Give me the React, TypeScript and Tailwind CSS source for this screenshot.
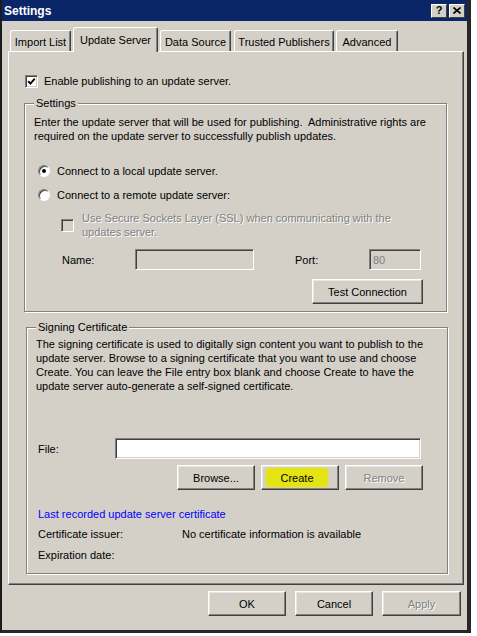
import React from 'react';

const raised =
  'flex items-center justify-center h-[25px] bg-[#d4d0c8] border border-t-white border-l-white border-r-[#404040] border-b-[#404040] shadow-[inset_-1px_-1px_0_#808080,inset_1px_1px_0_#e8e6e1]';
const sunken =
  'border border-t-[#808080] border-l-[#808080] border-r-white border-b-white shadow-[inset_1px_1px_0_#404040,inset_-1px_-1px_0_#d4d0c8]';
const etched =
  'border border-[#808080] shadow-[inset_1px_1px_0_#ffffff,1px_1px_0_#ffffff]';
const disabledText = 'text-[#808080] [text-shadow:1px_1px_0_#ffffff]';

const Check: React.FC<{ checked?: boolean; disabled?: boolean }> = ({ checked, disabled }) => (
  <span
    className={`w-[13px] h-[13px] shrink-0 flex items-center justify-center ${sunken} ${
      disabled ? 'bg-[#d4d0c8]' : 'bg-white'
    }`}
  >
    {checked && (
      <svg width="9" height="9" viewBox="0 0 9 9">
        <path d="M1.2 4.2 L3.4 6.6 L7.8 1.6" fill="none" stroke="#000" strokeWidth="1.9" />
      </svg>
    )}
  </span>
);

const Radio: React.FC<{ checked?: boolean }> = ({ checked }) => (
  <span className="w-[12px] h-[12px] shrink-0 rounded-full bg-white border border-t-[#808080] border-l-[#808080] border-r-white border-b-white shadow-[inset_1px_1px_0_#404040] flex items-center justify-center">
    {checked && <span className="w-[4px] h-[4px] rounded-full bg-black" />}
  </span>
);

const Tab: React.FC<{ label: string; width: string; active?: boolean; ml: string }> = ({
  label,
  width,
  active,
  ml,
}) => (
  <div
    className={`${width} ${ml} flex items-center justify-center border-t border-l border-t-white border-l-white border-r border-r-[#404040] shadow-[inset_-1px_0_0_#808080] rounded-tl-[3px] rounded-tr-[2px] bg-[#d4d0c8] ${
      active ? 'h-[25px] -mb-px relative z-10' : 'h-[21px] pt-[2px]'
    }`}
  >
    {label}
  </div>
);

export default function App() {
  return (
    <div className="w-[477px] h-[636px] bg-white font-['Liberation_Sans',Arial,sans-serif] text-[11px] leading-[14px] text-black">
      <div className="w-[471px] h-[633px] bg-[#d4d0c8] border-l-2 border-l-[#1c1c1c] border-r-4 border-r-[#262626] border-b-[3px] border-b-[#262626] flex flex-col">
        {/* Title bar */}
        <div className="h-[21px] shrink-0 bg-[#0b2569] flex items-center pl-[2px] pr-[2px]">
          <span className="text-white font-bold text-[12px] leading-[14px]">Settings</span>
          <div className="ml-auto flex gap-[2px]">
            <div className="w-[16px] h-[14px] bg-[#d4d0c8] border border-t-white border-l-white border-r-[#404040] border-b-[#404040] flex items-center justify-center font-bold text-[11px] leading-[11px]">
              ?
            </div>
            <div className="w-[16px] h-[14px] bg-[#d4d0c8] border border-t-white border-l-white border-r-[#404040] border-b-[#404040] flex items-center justify-center">
              <svg width="8" height="7" viewBox="0 0 8 7">
                <path d="M0.5 0.5 L7.5 6.5 M7.5 0.5 L0.5 6.5" stroke="#000" strokeWidth="1.6" />
              </svg>
            </div>
          </div>
        </div>

        {/* Tabs */}
        <div className="h-[30px] shrink-0 flex items-end pl-[8px]">
          <Tab label="Import List" width="w-[61px]" ml="ml-0" />
          <Tab label="Update Server" width="w-[85px]" ml="ml-[2px]" active />
          <Tab label="Data Source" width="w-[71px]" ml="ml-[2px]" />
          <Tab label="Trusted Publishers" width="w-[100px]" ml="ml-[3px]" />
          <Tab label="Advanced" width="w-[62px]" ml="ml-[2px]" />
        </div>

        {/* Panel */}
        <div className="ml-[6px] w-[456px] h-[534px] shrink-0 flex flex-col border border-t-white border-l-white border-r-[#404040] border-b-[#404040] shadow-[inset_-1px_-1px_0_#808080]">
          <label className="mt-[22px] ml-[16px] flex items-center gap-[6px]">
            <Check checked />
            <span>Enable publishing to an update server.</span>
          </label>

          {/* Settings group */}
          <fieldset className={`mt-[9px] ml-[15px] w-[423px] h-[215px] pl-[9px] ${etched}`}>
            <legend className="px-[2px] leading-[13px] bg-[#d4d0c8]">Settings</legend>
            <p className="mt-[5px]">
              Enter the update server that will be used for publishing.&nbsp; Administrative rights are
              <br />
              required on the update server to successfully publish updates.
            </p>
            <div className="mt-[21px] ml-[4px] flex items-center gap-[7px]">
              <Radio checked />
              <span>Connect to a local update server.</span>
            </div>
            <div className="mt-[10px] ml-[4px] flex items-center gap-[7px]">
              <Radio />
              <span>Connect to a remote update server:</span>
            </div>
            <div className="mt-[9px] ml-[27px] flex items-center gap-[8px]">
              <Check disabled />
              <span className={disabledText}>
                Use Secure Sockets Layer (SSL) when communicating with the
                <br />
                updates server.
              </span>
            </div>
            <div className="mt-[10px] ml-[28px] flex items-center">
              <span className="w-[73px]">Name:</span>
              <div className={`w-[119px] h-[21px] bg-[#d4d0c8] ${sunken}`} />
              <span className="ml-[41px] w-[74px]">Port:</span>
              <div className={`w-[52px] h-[21px] bg-[#d4d0c8] flex items-center pl-[3px] ${sunken}`}>
                <span className="text-[#808080]">80</span>
              </div>
            </div>
            <div className="mt-[9px] ml-[278px] w-[111px]">
              <button className={`${raised} w-[111px]`}>Test Connection</button>
            </div>
          </fieldset>

          {/* Signing certificate group */}
          <fieldset className={`mt-[9px] ml-[17px] w-[422px] h-[253px] pl-[9px] ${etched}`}>
            <legend className="px-[2px] leading-[13px] bg-[#d4d0c8]">Signing Certificate</legend>
            <p className="mt-[3px]">
              The signing certificate is used to digitally sign content you want to publish to the
              <br />
              update server. Browse to a signing certificate that you want to use and choose
              <br />
              Create. You can leave the File entry box blank and choose Create to have the
              <br />
              update server auto-generate a self-signed certificate.
            </p>
            <div className="mt-[45px] ml-[2px] flex items-center">
              <span className="w-[77px]">File:</span>
              <div className={`w-[306px] h-[21px] bg-white ${sunken}`} />
            </div>
            <div className="mt-[6px] ml-[141px] flex gap-[6px]">
              <button className={`${raised} w-[78px]`}>Browse...</button>
              <button className={`${raised} w-[78px]`}>
                <span className="mr-[6px] w-[62px] h-[19px] flex items-center justify-center bg-[#e4e414] rounded-[4px] shadow-[0_0_2px_#e4e414]">
                  Create
                </span>
              </button>
              <button className={`${raised} w-[78px]`}>
                <span className={disabledText}>Remove</span>
              </button>
            </div>
            <div className="mt-[17px] ml-[2px] text-[#0000ff]">Last recorded update server certificate</div>
            <div className="mt-[6px] ml-[2px] flex">
              <span className="w-[144px]">Certificate issuer:</span>
              <span>No certificate information is available</span>
            </div>
            <div className="mt-[7px] ml-[2px]">Expiration date:</div>
          </fieldset>
        </div>

        {/* Dialog buttons */}
        <div className="mt-[6px] pr-[6px] flex justify-end gap-[9px]">
          <button className={`${raised} w-[78px]`}>OK</button>
          <button className={`${raised} w-[78px]`}>Cancel</button>
          <button className={`${raised} w-[79px]`}>
            <span className={disabledText}>Apply</span>
          </button>
        </div>
      </div>
    </div>
  );
}
